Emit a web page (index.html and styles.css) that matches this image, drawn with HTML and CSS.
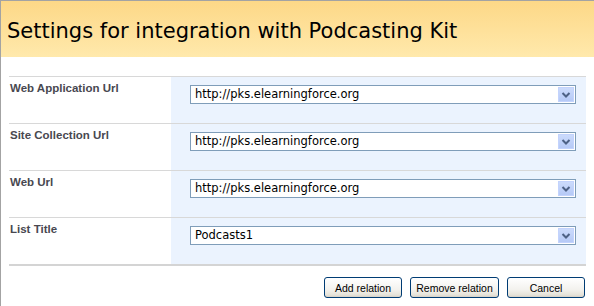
FILE: index.html
```html
<!DOCTYPE html>
<html>
<head>
<meta charset="utf-8">
<link rel="stylesheet" href="styles.css">
</head>
<body>
<div class="page">
  <div class="header"><h1 class="title">Settings for integration with Podcasting Kit</h1></div>
  <div class="form">
    <div class="grid">
      <div class="row">
        <div class="label">Web Application Url</div>
        <div class="field"><div class="select"><span class="value">http://pks.elearningforce.org</span><span class="arrow"><svg width="16" height="15" viewBox="0 0 16 15"><path d="M4.5 6 L8 9.5 L11.5 6" fill="none" stroke="#4d6185" stroke-width="2"/></svg></span></div></div>
      </div>
      <div class="row">
        <div class="label">Site Collection Url</div>
        <div class="field"><div class="select"><span class="value">http://pks.elearningforce.org</span><span class="arrow"><svg width="16" height="15" viewBox="0 0 16 15"><path d="M4.5 6 L8 9.5 L11.5 6" fill="none" stroke="#4d6185" stroke-width="2"/></svg></span></div></div>
      </div>
      <div class="row">
        <div class="label">Web Url</div>
        <div class="field"><div class="select"><span class="value">http://pks.elearningforce.org</span><span class="arrow"><svg width="16" height="15" viewBox="0 0 16 15"><path d="M4.5 6 L8 9.5 L11.5 6" fill="none" stroke="#4d6185" stroke-width="2"/></svg></span></div></div>
      </div>
      <div class="row last">
        <div class="label">List Title</div>
        <div class="field"><div class="select"><span class="value">Podcasts1</span><span class="arrow"><svg width="16" height="15" viewBox="0 0 16 15"><path d="M4.5 6 L8 9.5 L11.5 6" fill="none" stroke="#4d6185" stroke-width="2"/></svg></span></div></div>
      </div>
    </div>
    <div class="buttons">
      <button class="btn btn-add">Add relation</button>
      <button class="btn btn-remove">Remove relation</button>
      <button class="btn btn-cancel">Cancel</button>
    </div>
  </div>
</div>
</body>
</html>
```

FILE: styles.css
```css
html, body {
  margin: 0;
  padding: 0;
  background: #fff;
}
.page {
  width: 593px;
  height: 305px;
  border-top: 1px solid #a3a3a3;
  border-left: 1px solid #a3a3a3;
  overflow: hidden;
}
.header {
  height: 56px;
  background: linear-gradient(#fdd887, #ffe9ac);
  display: flex;
  align-items: center;
  padding-left: 6px;
}
.title {
  margin: 0;
  font-family: "DejaVu Sans", sans-serif;
  font-weight: normal;
  font-size: 21px;
  line-height: 24px;
  color: #000;
  padding-top: 4px;
}
.form {
  margin: 19px 0 0 8px;
  width: 577px;
}
.grid {
  border-top: 1px solid #d8d8d8;
}
.row {
  display: grid;
  grid-template-columns: 162px 1fr;
  height: 46px;
  border-bottom: 1px solid #d8d8d8;
}
.row.last {
  border-bottom: 2px solid #d4d4d4;
}
.label {
  font-family: "Liberation Sans", sans-serif;
  font-weight: bold;
  font-size: 11.5px;
  line-height: 14px;
  color: #484850;
  padding: 4px 0 0 1px;
}
.field {
  background: #ebf3fe;
  padding: 8px 0 0 19px;
}
.select {
  width: 384px;
  height: 17px;
  border: 1px solid #7f9db9;
  background: #fff;
  display: flex;
  align-items: center;
  justify-content: space-between;
}
.value {
  font-family: "DejaVu Sans", sans-serif;
  font-size: 11.5px;
  line-height: 15px;
  color: #000;
  padding-left: 4px;
}
.arrow {
  width: 16px;
  height: 15px;
  margin-right: 1px;
  background: linear-gradient(#cddcfc, #b4c8f6);
  box-shadow: inset 0 0 0 1px #c3d3fd;
  display: flex;
}
.buttons {
  display: flex;
  justify-content: flex-end;
  gap: 8px;
  margin-top: 11px;
  padding-right: 1px;
}
.btn {
  height: 21px;
  border: 1px solid #003c74;
  border-radius: 3px;
  background: linear-gradient(#ffffff, #f3f2ee 60%, #e5e2d8 90%, #d6d0c5);
  font-family: "Liberation Sans", sans-serif;
  font-size: 10.5px;
  color: #000;
  padding: 0;
  margin: 0;
}
.btn-add { width: 78px; }
.btn-remove { width: 89px; }
.btn-cancel { width: 78px; }
```
